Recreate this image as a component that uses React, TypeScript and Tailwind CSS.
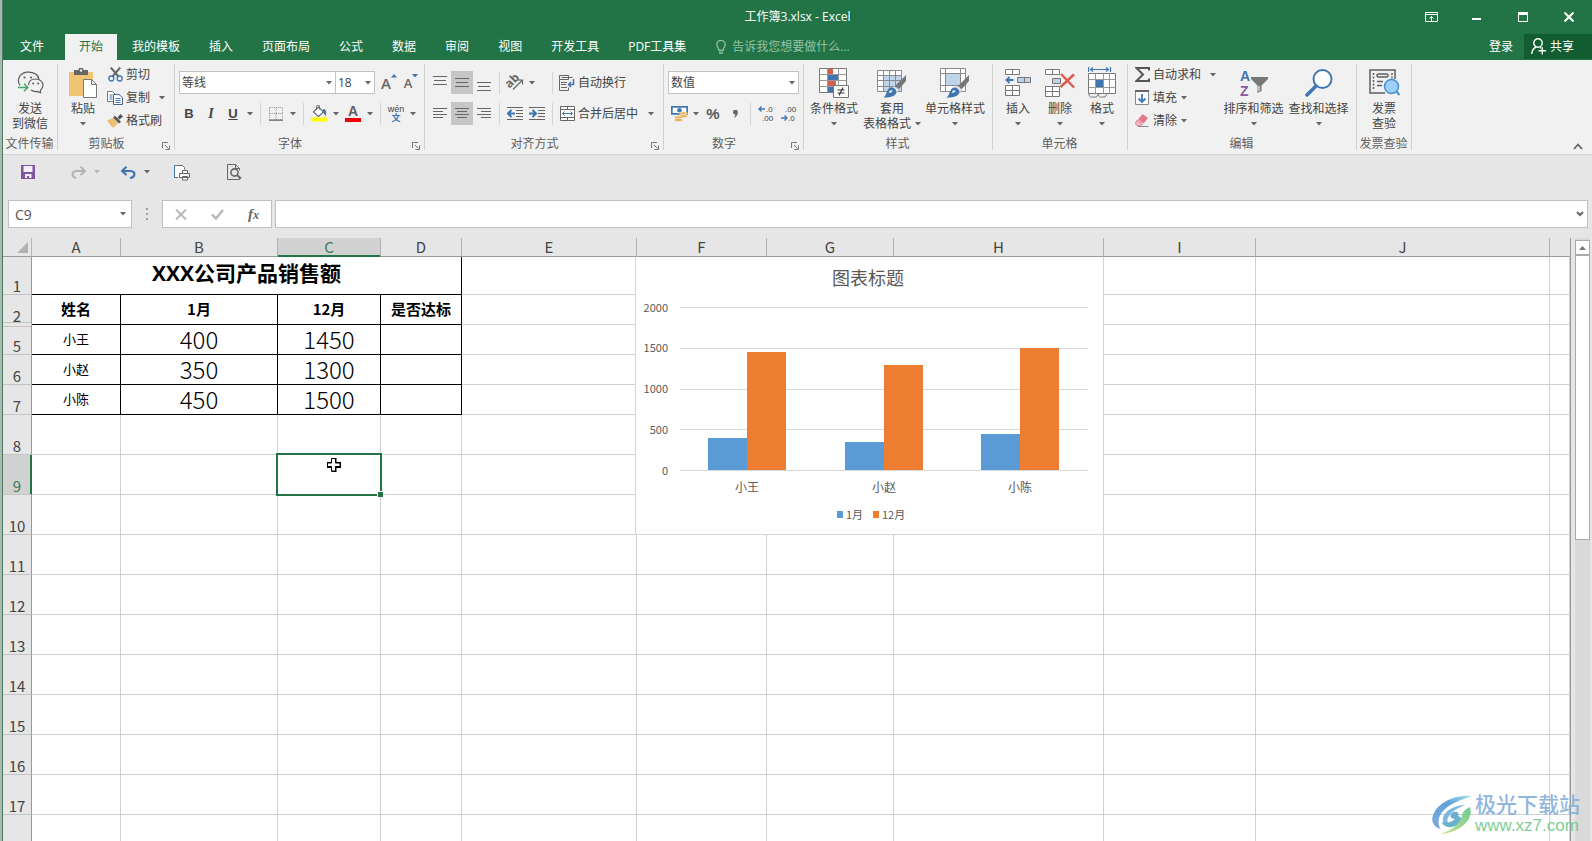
import type { ReactNode } from 'react';
import { clsx } from 'clsx';

const BLUE = '#3f76b0';
const GRAY = '#6a6a6a';

const tabs = ['我的模板', '插入', '页面布局', '公式', '数据', '审阅', '视图', '开发工具', 'PDF工具集'];

const columns = [
  { name: 'A', width: 'w-[89px]' },
  { name: 'B', width: 'w-[157px]' },
  { name: 'C', width: 'w-[103px]' },
  { name: 'D', width: 'w-[81px]' },
  { name: 'E', width: 'w-[175px]' },
  { name: 'F', width: 'w-[130px]' },
  { name: 'G', width: 'w-[127px]' },
  { name: 'H', width: 'w-[210px]' },
  { name: 'I', width: 'w-[152px]' },
  { name: 'J', width: 'w-[294px]' },
  { name: '', width: '' },
];

const sales = [
  { row: 5, name: '小王', jan: 400, dec: 1450 },
  { row: 6, name: '小赵', jan: 350, dec: 1300 },
  { row: 7, name: '小陈', jan: 450, dec: 1500 },
];

const emptyRows = [8, 9, 10, 11, 12, 13, 14, 15, 16, 17, 18];

/* ---------- ribbon building blocks ---------- */

function Caret({ faint }: { faint?: boolean }) {
  return (
    <svg width="6" height="4" viewBox="0 0 6 4" className="shrink-0">
      <path d="M0 0h6L3 3.5z" fill={faint ? '#b5b5b5' : '#666'} />
    </svg>
  );
}

function CaretButton({ label }: { label: string }) {
  return (
    <button aria-label={label} className="flex h-[22px] w-3 items-center justify-center">
      <Caret />
    </button>
  );
}

function Sep() {
  return <div className="mx-1 h-[22px] w-px bg-[#d4d4d4]" />;
}

function Group({
  label,
  className,
  launcher,
  children,
}: {
  label: string;
  className: string;
  launcher?: boolean;
  children: ReactNode;
}) {
  return (
    <section className={clsx('relative flex shrink-0 flex-col', className)}>
      <div className="flex h-[72px]">{children}</div>
      <div
        className={clsx(
          'flex h-[22px] items-center justify-center whitespace-nowrap pt-[2px] text-[#5f5f5f]',
          launcher ? 'pr-5' : 'pr-[2px]',
        )}
      >
        {label}
      </div>
      <div className="absolute right-0 top-1 h-[86px] w-px bg-[#d0d0d0]" />
      {launcher && (
        <button aria-label={label + '设置'} className="absolute bottom-1 right-[5px]">
          <svg width="8" height="8" viewBox="0 0 8 8" fill="none" stroke="#777">
            <path d="M.5 6V.5H6M3 3l3.500 3.500M7.500 3.500v4h-4" />
          </svg>
        </button>
      )}
    </section>
  );
}

function BigButton({
  icon,
  lines,
  caret,
  className,
}: {
  icon: ReactNode;
  lines: string[];
  caret?: boolean;
  className: string;
}) {
  return (
    <button className={clsx('flex flex-col items-center whitespace-nowrap', className)}>
      <span className="flex h-[41px] items-center justify-center pt-1">{icon}</span>
      <span className="h-[15px] leading-[15px]">{lines[0]}</span>
      <span className="flex h-[15px] items-center gap-1 leading-[15px]">
        {lines[1]}
        {caret && <Caret />}
      </span>
    </button>
  );
}

function SmallButton({ icon, label, caret }: { icon: ReactNode; label: string; caret?: ReactNode }) {
  return (
    <button className="flex h-[23px] items-center whitespace-nowrap">
      <span className="mr-[3px] flex w-4 justify-center">{icon}</span>
      {label}
      {caret}
    </button>
  );
}

function Tool({ label, active, children }: { label: string; active?: boolean; children: ReactNode }) {
  return (
    <button
      aria-label={label}
      className={clsx('flex h-[23px] w-[22px] items-center justify-center', active && 'bg-[#c6c6c6]')}
    >
      {children}
    </button>
  );
}

function Picker({ label, value, className }: { label: string; value: string; className: string }) {
  return (
    <label className={clsx('relative block', className)}>
      <select
        aria-label={label}
        className="h-[23px] w-full appearance-none border border-[#c3c3c3] bg-white pl-[2px] text-[12px] text-[#444] outline-none"
      >
        <option>{value}</option>
      </select>
      <span className="pointer-events-none absolute right-1 top-[10px]">
        <Caret />
      </span>
    </label>
  );
}

/* ---------- icons ---------- */

function WechatIcon() {
  return (
    <svg width="27" height="24" viewBox="0 0 27 24" fill="none" stroke="#5c5c5c" strokeWidth="1.2">
      <path d="M3 14.500C-.5 9.500 2 2.500 9.500 1.200c7-1 12 3 12.500 7" />
      <path d="M11.500 14c.3-4 3.500-6 7-6 4.500 0 7.500 3 7.500 6.200 0 2.500-1.500 4-2.500 5v2.600l-2.800-1.400c-3 .6-5-.2-6.700-1.400" />
      <path d="M1 16.500h9.500M7 12.800l3.800 3.700L7 20.200" stroke="#4ba36c" strokeWidth="1.400" />
      <g fill="#5c5c5c" stroke="none">
        <circle cx="7.500" cy="6.500" r="1.100" />
        <circle cx="14" cy="6.500" r="1.100" />
        <circle cx="16.200" cy="12.500" r="1" />
        <circle cx="21.200" cy="12.500" r="1" />
      </g>
    </svg>
  );
}

function PasteIcon() {
  return (
    <svg width="28" height="30" viewBox="0 0 28 30">
      <path d="M0 4h24v24H0z" fill="#efc473" />
      <path d="M5 2h4.500a2.500 2.500 0 0 1 5 0H19v5H5z" fill="#666" />
      <circle cx="12" cy="2.500" r="1.200" fill="#f0f0f0" />
      <path d="M14.500 11.500h8l5 5v13h-13z" fill="#fff" stroke="#777" />
      <path d="M22.500 11.500v5h5" fill="none" stroke="#777" />
    </svg>
  );
}

function CutIcon() {
  return (
    <svg width="15" height="15" viewBox="0 0 15 15" fill="none">
      <path d="M2.800.5 10.500 9.500M12.200.5 4.500 9.500" stroke="#666" strokeWidth="2" />
      <circle cx="3.300" cy="11.500" r="2.500" stroke={BLUE} strokeWidth="1.300" />
      <circle cx="11.700" cy="11.500" r="2.500" stroke={BLUE} strokeWidth="1.300" />
    </svg>
  );
}

function CopyIcon() {
  return (
    <svg width="16" height="14" viewBox="0 0 16 14" fill="#fff" stroke="#777">
      <path d="M.5.5h5l2.500 2.500v7.500H.5z" />
      <path d="M2.500 4h3M2.500 6h3M2.500 8h3" stroke={BLUE} />
      <path d="M6.500 3.500h5.500L15.500 6.500v7h-9z" stroke="#47668c" />
      <path d="M8.500 7.500h5M8.500 9.500h5M8.500 11.500h5" stroke={BLUE} />
    </svg>
  );
}

function PainterIcon() {
  return (
    <svg width="16" height="14" viewBox="0 0 16 14">
      <path d="M0 6.500 6 4l5 5-4.500 5C4 12 2 9.500 0 6.500z" fill="#edbf71" />
      <path d="m6 3.500 2-1.700 6 6L12 9.500z" fill="#555" />
      <path d="m10.500 3.500 3-3.500 2.500 2.500-3.500 3z" fill="#555" />
    </svg>
  );
}

function BordersIcon() {
  return (
    <svg width="14" height="14" viewBox="0 0 14 14" fill="none" stroke="#888">
      <path d="M.5.5h13v12H.5zM7 .5v12M.5 6.500h13" strokeDasharray="1 1.200" />
      <path d="M0 13.200h14" stroke="#555" />
    </svg>
  );
}

function FillIcon() {
  return (
    <svg width="16" height="17" viewBox="0 0 16 17">
      <path d="m2.500 7 5-5 5 5-5 4.500z" fill="#fff" stroke="#666" strokeWidth="1.100" />
      <path d="M5.500 5V1.500a1.500 1.500 0 0 1 3 0v3" fill="none" stroke="#666" />
      <path d="M12 4c3.500 0 3.800 3.500 2.700 7.500C14 10 13.500 8 11.500 7.500z" fill={BLUE} />
      <path d="M0 12.500h16v4H0z" fill="#ff0" />
    </svg>
  );
}

function FontColorIcon() {
  return (
    <span className="flex flex-col items-center">
      <span className="text-[14px] font-bold leading-[13px] text-[#606060]">A</span>
      <span className="h-1 w-4 bg-[#f00000]" />
    </span>
  );
}

function Lines({ rows }: { rows: [number, number, number][] }) {
  return (
    <svg width="14" height="17" viewBox="0 0 14 17" stroke="#666">
      {rows.map(([x, y, w]) => (
        <path key={y} d={`M${x} ${y + 0.5}h${w}`} />
      ))}
    </svg>
  );
}

function IndentIcon({ out }: { out?: boolean }) {
  return (
    <svg width="16" height="13" viewBox="0 0 16 13" fill="none" stroke="#666">
      <path d="M0 .5h16M9 3.500h7M9 6.500h7M9 9.500h7M0 12.500h16" />
      <path
        d={out ? 'M1 6.500h7M4.500 3 1 6.500 4.500 10' : 'M0 6.500h7M3.500 3 7 6.500 3.500 10'}
        stroke={BLUE}
        strokeWidth="2"
      />
    </svg>
  );
}

function OrientIcon() {
  return (
    <svg width="18" height="17" viewBox="0 0 18 17" className="overflow-visible">
      <text x="0" y="12" fontSize="12" fontWeight="700" fill="#666" transform="rotate(-45 5 9)">
        ab
      </text>
      <path d="m7 15.500 9-9M12 6h4.500v4.500" fill="none" stroke="#666" strokeWidth="1.200" />
    </svg>
  );
}

function WrapIcon() {
  return (
    <svg width="16" height="16" viewBox="0 0 16 16" fill="none" stroke="#666">
      <path d="M.5.5h9v4h-9zM.5 4.500v11h9v-3M2.500 2.500h11M2 7.500h6M2 9.500h5M2 12.500h6" />
      <path d="M14.500 4v5.500H9.500M12 7 9.500 9.500l2.500 2.500" stroke={BLUE} strokeWidth="1.500" />
    </svg>
  );
}

function MergeIcon() {
  return (
    <svg width="15" height="15" viewBox="0 0 15 15" fill="#fff" stroke="#666">
      <path d="M.5.5h14v14H.5zM.5 3.500h14M.5 11.500h14M7.500.5v3M7.500 11.500v3" />
      <path d="M2.500 7.500h10M4.500 5.500l-2 2 2 2M10.500 5.500l2 2-2 2" fill="none" stroke={BLUE} />
    </svg>
  );
}

function MoneyIcon() {
  return (
    <svg width="17" height="17" viewBox="0 0 17 17">
      <path d="M.8 1.800h15.400v7H.8z" fill="#fff" stroke={BLUE} strokeWidth="1.800" />
      <circle cx="8.500" cy="5.200" r="2.300" fill={BLUE} />
      <g fill="#e9b45c" stroke="#f0f0f0" strokeWidth=".6">
        <ellipse cx="12.500" cy="8.500" rx="4" ry="1.700" />
        <ellipse cx="12.500" cy="11" rx="4" ry="1.700" />
        <ellipse cx="7.500" cy="12.500" rx="4" ry="1.700" />
        <ellipse cx="7.500" cy="15" rx="4" ry="1.700" />
      </g>
    </svg>
  );
}

function DecimalIcon({ more }: { more?: boolean }) {
  return (
    <svg width="16" height="19" viewBox="0 0 16 19" fill="#444" className="overflow-visible font-['Liberation_Sans',sans-serif] text-[8px]">
      <text x={more ? 8 : 5} y="8">{more ? '.0' : '.00'}</text>
      <text x={more ? 4 : 8} y="17">{more ? '.00' : '.0'}</text>
      <path
        d={more ? 'M1 5h6M3.500 2.500 1 5l2.500 2.500' : 'M1 14h6M4.500 11.500 7 14l-2.500 2.500'}
        fill="none"
        stroke={BLUE}
        strokeWidth="1.400"
      />
    </svg>
  );
}

function Brush() {
  return (
    <g>
      <path d="M29 7v6L22 21l-4-3z" fill="#777" />
      <path d="m17 18 5 4-2 2.500-4.500-4z" fill="#f0f0f0" stroke="#999" strokeWidth=".5" />
      <path d="M13.500 19.500c3.500-.5 6.800 2.500 5.700 5.500-2 4-8 5-13 4.500 4-1.500 2.500-8 7.300-10z" fill={BLUE} />
      <path d="M12 24.500c0-2 2.500-3 4-1.500-1.500.3-2 3-4 1.500z" fill="#e8f0f8" />
    </g>
  );
}

function ConditionalIcon() {
  return (
    <svg width="30" height="30" viewBox="0 0 30 30">
      <path d="M.5.5h27v24H.5z" fill="#fff" stroke="#777" />
      <path d="M.5 6.500h27M.5 12.500h27M.5 18.500h27M8.500.5v24M19.500.5v24" stroke="#999" />
      <path d="M9 1h5v5H9zM9 13h8v5H9z" fill="#d4614c" />
      <path d="M9 7h10v5H9zM9 19h5v5H9z" fill={BLUE} />
      <path d="M14.500 17.500h15v12h-15z" fill="#fff" stroke="#777" />
      <path d="M18.500 22h7M18.500 25h7M24 19.500l-4 8" stroke="#333" strokeWidth="1.100" />
    </svg>
  );
}

function TableStyleIcon() {
  return (
    <svg width="30" height="30" viewBox="0 0 30 30">
      <path d="M.5 2.500h24v21H.5z" fill="#fff" />
      <path d="M6.500 8h18v15h-18z" fill="#c0d5ea" />
      <path
        d="M.5 2.500h24v21H.5zM.5 7.500h24M.5 12.500h24M.5 18.500h24M6.500 2.500v21M12.500 2.500v21M18.500 2.500v21"
        fill="none"
        stroke="#8a8a8a"
      />
      <Brush />
    </svg>
  );
}

function CellStyleIcon() {
  return (
    <svg width="30" height="30" viewBox="0 0 30 30">
      <path d="M.5.500h25v23H.5z" fill="#fff" />
      <path d="M6 6h14v11H6z" fill="#c0d5ea" />
      <path d="M.5.5h25v23H.5zM.5 5.500h25M.5 17.500h25M5.500.5v23M20.500.5v23" fill="none" stroke="#8a8a8a" />
      <Brush />
    </svg>
  );
}

function InsertCellsIcon() {
  return (
    <svg width="26" height="28" viewBox="0 0 26 28" fill="#fff" stroke="#777">
      <path d="M.5.5h14v5H.5zM7.500.5v5M.5 16.500h14v10H.5zM.5 21.500h14M7.500 16.500v10" />
      <path d="M12.500 8.500h13v5h-13zM19.500 8.500v5" fill="#bdd3e8" />
      <path d="M1.500 11h7M4.500 8l-3 3 3 3" fill="none" stroke={BLUE} strokeWidth="1.800" />
    </svg>
  );
}

function DeleteCellsIcon() {
  return (
    <svg width="30" height="28" viewBox="0 0 30 28" fill="#fff" stroke="#777">
      <path d="M.5.5h14v5H.5zM7.500.5v5M.5 17.500h14v10H.5zM.5 22.500h14M7.500 17.500v10" />
      <path d="M7.500 9.500h8v5h-8z" fill="#bdd3e8" />
      <path d="m16 5 13 13.500M29 5.500 15.500 18" fill="none" stroke="#dc5a48" strokeWidth="2.400" />
    </svg>
  );
}

function FormatCellsIcon() {
  return (
    <svg width="28" height="31" viewBox="0 0 28 31" fill="none" stroke="#777">
      <path d="M.5 0v5M22.500 0v5M2.500 2.500h18M5 .5l-2.500 2L5 4.500M18 .5l2.500 2-2.500 2" stroke={BLUE} strokeWidth="1.200" />
      <path d="M.5 6.500h27v20H.5z" fill="#fff" />
      <path d="M8 12h8v9H8z" fill={BLUE} stroke="none" />
      <path d="M.5 12.500h27M.5 20.500h27M7.500 6.500v20M15.500 6.500v20M21.500 6.500v20" stroke="#999" />
      <path d="M1 27c0 3 2 3.500 4 3h3.500l2-3M10.500 27c0 3 2 3.500 4 3H17l2-3" />
    </svg>
  );
}

function SigmaIcon() {
  return (
    <svg width="15" height="15" viewBox="0 0 15 15" fill="none" stroke="#555" strokeWidth="2">
      <path d="M14 3.500V1H1.500L8 7.500 1.500 14H14v-2.500" />
    </svg>
  );
}

function FillDownIcon() {
  return (
    <svg width="14" height="15" viewBox="0 0 14 15" fill="#fff" stroke="#888">
      <path d="M.5.500h13v14H.5z" />
      <path d="M0 1h14" stroke="#666" strokeWidth="2" />
      <path d="M7 4v8M3.500 8.500 7 12l3.500-3.500" fill="none" stroke={BLUE} strokeWidth="1.800" />
    </svg>
  );
}

function EraserIcon() {
  return (
    <svg width="14" height="13" viewBox="0 0 14 13">
      <path d="M7.500 0 13 4 8.500 9.500 3 5.500z" fill="#e07a8d" />
      <path d="M2.500 6 7.500 10 5.500 12h-3L0 9.500z" fill="#f3b7c0" stroke="#e07a8d" />
      <path d="M3 12.500h10.500" stroke="#888" />
    </svg>
  );
}

function SortIcon() {
  return (
    <svg width="30" height="28" viewBox="0 0 30 28" className="overflow-visible font-['Liberation_Sans',sans-serif] text-[14px] font-bold">
      <text x="1" y="12" fill={BLUE}>A</text>
      <text x="1" y="27" fill="#8a5aa8">Z</text>
      <path d="M12 8h17v2l-6.500 6.500V22l-4 2v-7.500L12 10z" fill="#777" />
      <path d="M20 17v5" stroke="#f0f0f0" strokeWidth="1.200" />
    </svg>
  );
}

function FindIcon() {
  return (
    <svg width="28" height="28" viewBox="0 0 28 28" fill="none" stroke={BLUE}>
      <circle cx="17.500" cy="10" r="9" fill="#fff" strokeWidth="2" />
      <path d="M11 17 2 26" strokeWidth="3.500" strokeLinecap="round" />
    </svg>
  );
}

function InvoiceIcon() {
  return (
    <svg width="31" height="27" viewBox="0 0 31 27" fill="none" stroke="#5f5f5f" strokeWidth="1.500">
      <path d="M26 10V1H1v23h15" />
      <path d="M4.500 4v17" strokeDasharray="2 1.500" />
      <path d="M23 4v6" strokeDasharray="2 1.500" />
      <rect x="8" y="5" width="11" height="3" rx="1.500" />
      <path d="M8 12.500h6M8 16.500h5" />
      <circle cx="22.500" cy="17.500" r="7" fill="#9bd0fb" stroke="#4a90d0" />
      <path d="m27.500 22.500 3 3.500" stroke="#4a90d0" strokeWidth="2" />
    </svg>
  );
}

/* ---------- window parts ---------- */

function WindowButton({ label, children }: { label: string; children: ReactNode }) {
  return (
    <button aria-label={label} className="flex h-full w-[46px] items-center justify-center">
      {children}
    </button>
  );
}

function TitleBar() {
  return (
    <header className="bg-[#227447] text-white">
      <div className="flex h-[34px] items-center">
        <div className="flex-1" />
        <h1 className="font-normal">工作簿3.xlsx - Excel</h1>
        <div className="flex h-full flex-1 items-center justify-end">
          <WindowButton label="功能区显示选项">
            <svg width="13" height="10" viewBox="0 0 13 10" fill="none" stroke="#fff">
              <path d="M.5.5h12v9H.5zM.5 2.500h12M6.500 9V4.500M4.500 6.500l2-2 2 2" />
            </svg>
          </WindowButton>
          <WindowButton label="最小化">
            <svg width="10" height="10" viewBox="0 0 10 10">
              <path d="M0 6h9v2H0z" fill="#fff" />
            </svg>
          </WindowButton>
          <WindowButton label="最大化">
            <svg width="10" height="10" viewBox="0 0 10 10">
              <path d="M.5 1.500h9v8h-9z" fill="none" stroke="#fff" />
              <path d="M0 0h10v3H0z" fill="#fff" />
            </svg>
          </WindowButton>
          <WindowButton label="关闭">
            <svg width="10" height="10" viewBox="0 0 10 10" stroke="#fff" strokeWidth="2">
              <path d="m.5.5 9 9M9.500.5l-9 9" />
            </svg>
          </WindowButton>
        </div>
      </div>
      <nav className="flex h-[26px] items-stretch gap-px whitespace-nowrap">
        <button className="ml-[3px] mr-[6px] px-[14px]">文件</button>
        <button className="bg-[#f1f1f1] px-[14px] text-[#227447]">开始</button>
        {tabs.map((tab) => (
          <button key={tab} className="px-[14px]">{tab}</button>
        ))}
        <label className="ml-[15px] flex items-center gap-[6px]">
          <svg width="10" height="14" viewBox="0 0 10 14" fill="none" stroke="#94c3a4" strokeWidth="1.300">
            <path d="M3 10.500C3 8 .8 7 .8 4.600a4.200 4.200 0 0 1 8.400 0C9.200 7 7 8 7 10.500zM3 13h4" />
          </svg>
          <input
            aria-label="告诉我您想要做什么"
            placeholder="告诉我您想要做什么..."
            className="w-32 bg-transparent placeholder-[#94c3a4] outline-none"
          />
        </label>
        <div className="flex-1" />
        <button className="px-[10px]">登录</button>
        <button className="mb-px flex w-[68px] items-center gap-1 bg-[#115c30] pl-[7px]">
          <svg width="15" height="17" viewBox="0 0 15 17" fill="none" stroke="#fff" strokeWidth="1.400">
            <circle cx="7" cy="5" r="4.200" />
            <path d="M.8 16c0-4 2-6 4.500-7M9 9.500l1 .8M7.500 12.800H15M11.200 9.200v7.200" />
          </svg>
          共享
        </button>
      </nav>
    </header>
  );
}

function Ribbon() {
  return (
    <div className="relative flex border-b border-[#d2d2d2] bg-[#f1f1f1]">
      <Group label="文件传输" className="w-[55px]">
        <BigButton icon={<WechatIcon />} lines={['发送', '到微信']} className="w-[54px]" />
      </Group>

      <Group label="剪贴板" className="w-[117px]" launcher>
        <BigButton icon={<PasteIcon />} lines={['粘贴']} caret className="ml-1 w-[42px]" />
        <div className="ml-[3px] mt-[3px] flex flex-col">
          <SmallButton icon={<CutIcon />} label="剪切" />
          <SmallButton icon={<CopyIcon />} label="复制" caret={<span className="ml-[9px]"><Caret /></span>} />
          <SmallButton icon={<PainterIcon />} label="格式刷" />
        </div>
      </Group>

      <Group label="字体" className="w-[250px]" launcher>
        <div className="flex flex-col gap-2 pt-[11px]">
          <div className="flex items-center pl-1">
            <Picker label="字体" value="等线" className="w-[157px]" />
            <Picker label="字号" value="18" className="-ml-px w-10" />
            <button
              aria-label="增大字号"
              className="ml-[3px] flex w-[22px] items-start justify-center text-[15px] font-semibold leading-[18px] text-[#666]"
            >
              A
              <svg width="6" height="4" viewBox="0 0 6 4"><path d="M3 0l3 3.500H0z" fill={BLUE} /></svg>
            </button>
            <button
              aria-label="减小字号"
              className="flex w-[22px] items-start justify-center text-[13px] font-semibold leading-[18px] text-[#666]"
            >
              A
              <svg width="6" height="4" viewBox="0 0 6 4"><path d="M0 0h6L3 3.500z" fill={BLUE} /></svg>
            </button>
          </div>
          <div className="flex items-center pl-[3px] font-['Liberation_Sans','Noto_Sans_CJK_SC',sans-serif] text-[13px] text-[#444]">
            <Tool label="加粗"><b>B</b></Tool>
            <Tool label="倾斜"><i className="font-['Liberation_Serif',serif] text-[14px] font-bold">I</i></Tool>
            <Tool label="下划线"><b className="underline">U</b></Tool>
            <CaretButton label="下划线选项" />
            <Sep />
            <Tool label="边框"><BordersIcon /></Tool>
            <CaretButton label="边框选项" />
            <Sep />
            <Tool label="填充颜色"><FillIcon /></Tool>
            <CaretButton label="填充颜色选项" />
            <Tool label="字体颜色"><FontColorIcon /></Tool>
            <CaretButton label="字体颜色选项" />
            <Sep />
            <Tool label="拼音">
              <span className="flex flex-col items-center text-[9px] leading-[9px]">
                wén
                <span className="font-bold text-[#3f76b0]">文</span>
              </span>
            </Tool>
            <CaretButton label="拼音选项" />
          </div>
        </div>
      </Group>

      <Group label="对齐方式" className="w-[239px]" launcher>
        <div className="flex flex-col gap-2 pl-1 pt-[11px]">
          <div className="flex items-center">
            <Tool label="顶端对齐"><Lines rows={[[0, 2, 14], [1, 6, 12], [0, 10, 14]]} /></Tool>
            <Tool label="垂直居中" active><Lines rows={[[0, 4, 14], [1, 8, 12], [0, 12, 14]]} /></Tool>
            <Tool label="底端对齐"><Lines rows={[[0, 8, 14], [1, 12, 12], [0, 16, 14]]} /></Tool>
            <Sep />
            <Tool label="方向"><OrientIcon /></Tool>
            <CaretButton label="方向选项" />
            <span className="w-[10px]" />
            <Sep />
            <span className="w-[2px]" />
            <SmallButton icon={<WrapIcon />} label="自动换行" />
          </div>
          <div className="flex items-center">
            <Tool label="左对齐"><Lines rows={[[0, 3, 14], [0, 6, 10], [0, 9, 14], [0, 12, 10]]} /></Tool>
            <Tool label="居中" active><Lines rows={[[0, 3, 14], [2, 6, 10], [0, 9, 14], [2, 12, 10]]} /></Tool>
            <Tool label="右对齐"><Lines rows={[[0, 3, 14], [4, 6, 10], [0, 9, 14], [4, 12, 10]]} /></Tool>
            <Sep />
            <Tool label="减少缩进量"><IndentIcon out /></Tool>
            <Tool label="增加缩进量"><IndentIcon /></Tool>
            <Sep />
            <span className="w-[2px]" />
            <SmallButton
              icon={<MergeIcon />}
              label="合并后居中"
              caret={<span className="ml-[10px]"><Caret /></span>}
            />
          </div>
        </div>
      </Group>

      <Group label="数字" className="w-[140px]" launcher>
        <div className="flex flex-col gap-2 pl-1 pt-[11px]">
          <Picker label="数字格式" value="数值" className="w-[131px]" />
          <div className="flex items-center font-['Liberation_Sans','Noto_Sans_CJK_SC',sans-serif] text-[#555]">
            <Tool label="会计数字格式"><MoneyIcon /></Tool>
            <CaretButton label="会计数字格式选项" />
            <Tool label="百分比样式"><span className="text-[15px] font-bold">%</span></Tool>
            <Tool label="千位分隔样式">
              <svg width="5" height="8" viewBox="0 0 5 8">
                <path d="M0 2a2.400 2.400 0 0 1 4.800 0C5 5 3 7 .8 8 2 6.500 2.500 5 2.200 4.400A2.300 2.300 0 0 1 0 2z" fill={GRAY} />
              </svg>
            </Tool>
            <Sep />
            <Tool label="增加小数位数"><DecimalIcon more /></Tool>
            <Tool label="减少小数位数"><DecimalIcon /></Tool>
          </div>
        </div>
      </Group>

      <Group label="样式" className="w-[189px]">
        <BigButton icon={<ConditionalIcon />} lines={['条件格式']} caret className="ml-1 w-[52px]" />
        <BigButton icon={<TableStyleIcon />} lines={['套用', '表格格式']} caret className="w-16" />
        <BigButton icon={<CellStyleIcon />} lines={['单元格样式']} caret className="w-[62px]" />
      </Group>

      <Group label="单元格" className="w-[135px]">
        <BigButton icon={<InsertCellsIcon />} lines={['插入']} caret className="ml-1 w-[42px]" />
        <BigButton icon={<DeleteCellsIcon />} lines={['删除']} caret className="w-[42px]" />
        <BigButton icon={<FormatCellsIcon />} lines={['格式']} caret className="w-[42px]" />
      </Group>

      <Group label="编辑" className="w-[229px]">
        <div className="ml-[6px] mt-[3px] flex w-[87px] flex-col">
          <SmallButton icon={<SigmaIcon />} label="自动求和" caret={<span className="ml-[9px]"><Caret /></span>} />
          <SmallButton icon={<FillDownIcon />} label="填充" caret={<span className="ml-1"><Caret /></span>} />
          <SmallButton icon={<EraserIcon />} label="清除" caret={<span className="ml-1"><Caret /></span>} />
        </div>
        <BigButton icon={<SortIcon />} lines={['排序和筛选']} caret className="w-[65px]" />
        <BigButton icon={<FindIcon />} lines={['查找和选择']} caret className="w-[65px]" />
      </Group>

      <Group label="发票查验" className="w-[55px]">
        <BigButton icon={<InvoiceIcon />} lines={['发票', '查验']} className="w-[54px]" />
      </Group>

      <button aria-label="折叠功能区" className="absolute bottom-1 right-[9px]">
        <svg width="10" height="7" viewBox="0 0 10 7" fill="none" stroke="#666" strokeWidth="1.800">
          <path d="m1 6 4-4.500L9 6" />
        </svg>
      </button>
    </div>
  );
}

function QuickAccess() {
  return (
    <div className="flex h-[45px] items-center pb-[11px] pl-[18px]">
      <button aria-label="保存">
        <svg width="14" height="14" viewBox="0 0 14 14">
          <path d="M0 0h14v14H0z" fill="#8055a0" />
          <path d="M2.500 1h9v6h-9zM4 9h6.500v4H8v-2H6v2H4z" fill="#f4f0f7" />
        </svg>
      </button>
      <button aria-label="恢复" className="ml-9 flex items-center gap-2">
        <svg width="15" height="13" viewBox="0 0 15 13" fill="none" stroke="#b3b3b3" strokeWidth="2">
          <path d="M14 5H5.500C0 5.500.500 11 5 12M9.500.8 14 5 9.500 9" />
        </svg>
        <Caret faint />
      </button>
      <button aria-label="撤消" className="ml-[21px] flex items-center gap-2">
        <svg width="15" height="13" viewBox="0 0 15 13" fill="none" stroke={BLUE} strokeWidth="2.200">
          <path d="M1 5h8.500C15 5.500 14.500 11 9 12M5.500.8 1 5l4.500 4" />
        </svg>
        <Caret />
      </button>
      <button aria-label="快速打印" className="ml-6">
        <svg width="17" height="17" viewBox="0 0 17 17" fill="#fff" stroke="#666">
          <path d="M4 13.500H.5V1.500h8l2 2v2" />
          <path d="M.5 13.500V1.500h2" stroke={BLUE} />
          <path d="M8.500 6.500h5v3h-5zM5.500 9.500h10v4h-10zM8.500 12.500h5v3.500h-5z" />
        </svg>
      </button>
      <button aria-label="打印预览" className="ml-9">
        <svg width="15" height="16" viewBox="0 0 15 16" fill="none" stroke="#666">
          <path d="M12.500 13.500v2H.5V.5h8l4 4v2M8.500.5v4h4" />
          <circle cx="7.500" cy="8.500" r="3.600" strokeWidth="1.600" />
          <path d="m10.200 11.200 3.800 3.300" strokeWidth="2" />
        </svg>
      </button>
    </div>
  );
}

function FormulaBar() {
  return (
    <div className="flex h-7 items-stretch pl-[5px] pr-1">
      <label className="relative block w-[124px]">
        <input
          aria-label="名称框"
          defaultValue="C9"
          className="h-full w-full border border-[#c0c0c0] bg-white pl-[6px] text-[14px] text-[#555] outline-none"
        />
        <span className="pointer-events-none absolute right-[6px] top-3">
          <Caret />
        </span>
      </label>
      <div className="flex w-[30px] flex-col items-center justify-center gap-[3px]">
        <span className="size-[2px] bg-[#a0a0a0]" />
        <span className="size-[2px] bg-[#a0a0a0]" />
        <span className="size-[2px] bg-[#a0a0a0]" />
      </div>
      <div className="mr-[3px] flex w-[110px] items-center justify-around border border-[#c0c0c0] bg-white">
        <button aria-label="取消">
          <svg width="12" height="11" viewBox="0 0 12 11" stroke="#b8b8b8" strokeWidth="2">
            <path d="m1 .5 10 10M11 .5l-10 10" />
          </svg>
        </button>
        <button aria-label="输入">
          <svg width="13" height="11" viewBox="0 0 13 11" fill="none" stroke="#b8b8b8" strokeWidth="2.400">
            <path d="m1 5.500 4 4L12 1" />
          </svg>
        </button>
        <button aria-label="插入函数" className="font-['Liberation_Serif',serif] text-[15px] font-bold italic text-[#666]">
          f<span className="text-[12px]">x</span>
        </button>
      </div>
      <label className="relative block flex-1">
        <input aria-label="编辑栏" className="h-full w-full border border-[#c0c0c0] bg-white px-2 outline-none" />
        <svg width="8" height="6" viewBox="0 0 8 6" fill="none" stroke="#666" strokeWidth="2" className="absolute right-1 top-[11px]">
          <path d="m1 1 3 3 3-3" />
        </svg>
      </label>
    </div>
  );
}

function SalesChart() {
  const ticks = [0, 500, 1000, 1500, 2000];
  const y = (value: number) => 213.5 - (value / 2000) * 163;
  return (
    <svg
      width="469"
      height="278"
      viewBox="0 0 469 278"
      fontSize="11"
      fill="#595959"
      className="absolute -left-[2px] top-0 z-10 bg-white"
    >
      <path d="M.5 0v277.500h468V0" fill="none" stroke="#d4d4d4" />
      <text x="233" y="28" fontSize="18" textAnchor="middle">图表标题</text>
      {ticks.map((tick) => (
        <g key={tick}>
          <path d={`M45 ${Math.floor(y(tick)) + 0.5}h408`} stroke="#d9d9d9" />
          <text x="33" y={y(tick) + 4} textAnchor="end">{tick}</text>
        </g>
      ))}
      {sales.map((item, i) => {
        const center = 112 + Math.round(i * 136.5);
        return (
          <g key={item.name}>
            <rect x={center - 39} y={Math.round(y(item.jan))} width="39" height={213 - Math.round(y(item.jan))} fill="#5b9bd5" />
            <rect x={center} y={Math.round(y(item.dec))} width="39" height={213 - Math.round(y(item.dec))} fill="#ed7d31" />
            <text x={center} y="235" fontSize="12" textAnchor="middle">{item.name}</text>
          </g>
        );
      })}
      <path d="M202 254h6v7h-6z" fill="#5b9bd5" />
      <text x="211" y="262">1月</text>
      <path d="M238 254h6v7h-6z" fill="#ed7d31" />
      <text x="247" y="262">12月</text>
    </svg>
  );
}

function Selection() {
  return (
    <>
      <div className="absolute -inset-[2px] z-10 border-2 border-[#227447]">
        <span className="absolute -bottom-[3px] -right-[3px] size-[6px] border-l border-t border-white bg-[#227447]" />
      </div>
      <svg width="16" height="16" viewBox="0 0 16 16" className="absolute left-12 top-[2px] z-20">
        <path d="M5.500 1h5v4H15v6h-4.500v4h-5v-4H1V5h4.500z" fill="#000" />
        <path d="M5.500 1.500h4v4.500H14v3.500H9.500v4.500h-4V9.500H1.500V6h4z" fill="#fff" stroke="#000" strokeWidth="1" />
      </svg>
    </>
  );
}

function RowHead({ row, active, hidden }: { row: number; active?: boolean; hidden?: 'above' | 'below' }) {
  return (
    <th
      scope="row"
      className={clsx(
        'border-b border-r p-0 align-bottom text-[15px] font-normal leading-[17px]',
        active
          ? 'border-r-[#227447] bg-[#d2d2d2] text-[#3d7a58] shadow-[inset_-1px_0_0_#227447]'
          : 'border-r-[#999] text-[#444]',
        hidden === 'below' ? 'border-b-transparent shadow-[inset_0_-1px_0_#e6e6e6,inset_0_-2px_0_#c4c4c4]' : 'border-b-[#c4c4c4]',
        hidden === 'above' && 'shadow-[inset_0_1px_0_#e6e6e6,inset_0_2px_0_#c4c4c4]',
      )}
    >
      {row}
    </th>
  );
}

const plainCell = 'relative border-b border-r border-[#d0d0d0] bg-white p-0';
const dataCell = 'border-b border-r border-black bg-white p-0 pb-[2px] text-center text-black';

function EmptyCells({ from = 0, row }: { from?: number; row: number }) {
  return columns.slice(from).map((column) => (
    <td key={column.name} className={plainCell}>
      {row === 1 && column.name === 'F' && <SalesChart />}
      {row === 9 && column.name === 'C' && <Selection />}
    </td>
  ));
}

function Sheet() {
  return (
    <table className="w-full table-fixed border-separate border-spacing-0 border-r border-[#999]">
      <colgroup>
        <col className="w-[29px]" />
        {columns.map((column) => (
          <col key={column.name} className={column.width} />
        ))}
      </colgroup>
      <thead>
        <tr className="h-[19px]">
          <th className="border-b border-r border-b-[#999] border-r-[#b5b5b5] p-0">
            <svg width="11" height="11" viewBox="0 0 11 11" className="ml-auto mr-[3px]">
              <path d="M11 0v11H0z" fill="#b2b2b2" />
            </svg>
          </th>
          {columns.map((column) => (
            <th
              key={column.name}
              scope="col"
              className={clsx(
                'border-b border-r border-r-[#b0b0b0] p-0 text-[15px] font-normal leading-[18px]',
                column.name === 'C'
                  ? 'border-b-[#227447] bg-[#d2d2d2] text-[#3d7a58] shadow-[inset_0_-1px_0_#227447]'
                  : 'border-b-[#999] text-[#444]',
                column.name === '' && 'border-r-transparent',
              )}
            >
              {column.name}
            </th>
          ))}
        </tr>
      </thead>
      <tbody>
        <tr className="h-[38px]">
          <RowHead row={1} />
          <td
            colSpan={4}
            className={clsx(
              dataCell,
              "align-top font-['Open_Sans','Noto_Sans_CJK_SC',sans-serif] text-[21px] font-bold leading-8",
            )}
          >
            XXX公司产品销售额
          </td>
          <EmptyCells from={4} row={1} />
        </tr>
        <tr className="h-[30px]">
          <RowHead row={2} hidden="below" />
          {['姓名', '1月', '12月', '是否达标'].map((title) => (
            <td key={title} className={clsx(dataCell, 'text-[15px] font-bold leading-5')}>{title}</td>
          ))}
          <EmptyCells from={4} row={2} />
        </tr>
        {sales.map((item, i) => (
          <tr key={item.row} className="h-[30px]">
            <RowHead row={item.row} hidden={i === 0 ? 'above' : undefined} />
            <td className={clsx(dataCell, 'text-[13px] leading-5')}>{item.name}</td>
            <td className={clsx(dataCell, 'text-[24px] font-light leading-6')}>{item.jan}</td>
            <td className={clsx(dataCell, 'text-[24px] font-light leading-6')}>{item.dec}</td>
            <td className={dataCell} />
            <EmptyCells from={4} row={item.row} />
          </tr>
        ))}
        {emptyRows.map((row) => (
          <tr key={row} className="h-10">
            <RowHead row={row} active={row === 9} />
            <EmptyCells row={row} />
          </tr>
        ))}
      </tbody>
    </table>
  );
}

function ScrollBar() {
  return (
    <div className="ml-1 mr-[2px] flex w-[15px] flex-col bg-[#dadada] pt-[2px]">
      <button aria-label="向上滚动" className="flex h-[15px] shrink-0 items-center justify-center border border-[#aaa] bg-white">
        <svg width="7" height="4" viewBox="0 0 7 4"><path d="M3.500 0 7 4H0z" fill="#777" /></svg>
      </button>
      <div className="h-[285px] border border-[#aaa] bg-white" />
    </div>
  );
}

function Watermark() {
  return (
    <div className="absolute bottom-[6px] right-3 z-30 flex items-end gap-[2px] opacity-90">
      <svg width="42" height="40" viewBox="0 0 42 40">
        <defs>
          <linearGradient id="sweep" x1="0" y1="1" x2="1" y2="0">
            <stop offset="0" stopColor="#6f9fdc" />
            <stop offset=".6" stopColor="#4f9bd6" />
            <stop offset="1" stopColor="#a5e0ec" />
          </linearGradient>
          <linearGradient id="leaf" x1="0" y1="1" x2="1" y2="0">
            <stop offset="0" stopColor="#c4e07a" />
            <stop offset="1" stopColor="#5fc58a" />
          </linearGradient>
        </defs>
        <path d="M41 1C24-1 5 8 1.500 22c-1 6 2 10 8 12C6 28 7 21 13 15 20 8 30 5 41 1z" fill="url(#sweep)" />
        <path d="M34 10c-9 0-20 5-22 13-1 5 3 8 9 7-5-1-6-5-3-9 3-5 9-8 16-11z" fill="#6fb1dd" />
        <path d="M22 17c-4 3-3 7 2 7-3 3-9 5-13 3 1 5 9 7 15 3 5-3 6-8 1-9 2-3-1-5-5-4z" fill="#5aa9c9" />
        <path d="M39 12c4 12-9 25-29 27 12-4 20-11 21-19 1-4 4-6 8-8z" fill="url(#leaf)" />
      </svg>
      <div className="flex flex-col whitespace-nowrap">
        <span className="text-[21px] font-medium leading-[26px] text-[#86afdb]">极光下载站</span>
        <span className="font-['Liberation_Sans',Arial,sans-serif] text-[17px] leading-[18px] text-[#72c98c]">www.xz7.com</span>
      </div>
    </div>
  );
}

export default function App() {
  return (
    <div className="h-screen border-l-2 border-[#a9bbb1] font-['Open_Sans','Noto_Sans_CJK_SC',sans-serif] text-[12px] leading-[18px] text-[#444]">
      <div className="relative flex h-full flex-col overflow-hidden border-l border-[#4a7a62] bg-[#e6e6e6]">
        <TitleBar />
        <Ribbon />
        <QuickAccess />
        <FormulaBar />
        <main className="flex min-h-0 flex-1 overflow-hidden pt-[10px]">
          <div className="min-w-0 flex-1 overflow-hidden font-['Noto_Sans_CJK_SC',sans-serif]">
            <Sheet />
          </div>
          <ScrollBar />
        </main>
        <Watermark />
      </div>
    </div>
  );
}
